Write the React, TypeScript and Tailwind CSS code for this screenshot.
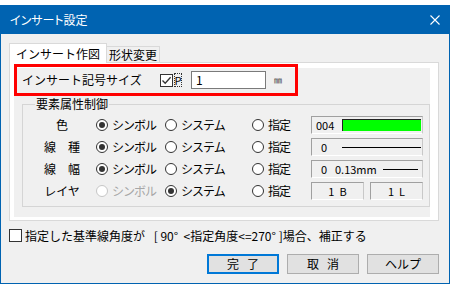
import React from "react";

function Radio({ checked, disabled, label }: { checked?: boolean; disabled?: boolean; label: string }) {
  return (
    <div className="flex items-center">
      <span
        className={`w-[12px] h-[12px] rounded-full border bg-white flex items-center justify-center shrink-0 ${
          disabled ? "border-[#c6c6c6]" : "border-[#333333]"
        }`}
      >
        {checked && <span className="w-[6px] h-[6px] rounded-full bg-[#333333]" />}
      </span>
      <span className={`ml-[4px] tracking-[-1px] whitespace-nowrap ${disabled ? "text-[#a6a6a6]" : "text-black"}`}>
        {label}
      </span>
    </div>
  );
}

function Field({ children, className = "" }: { children?: React.ReactNode; className?: string }) {
  return (
    <div
      className={`h-[18px] border border-t-[#a0a0a0] border-l-[#a0a0a0] border-r-[#c8c8c8] border-b-white flex items-center text-[11px] ${className}`}
    >
      {children}
    </div>
  );
}

function Row({
  label,
  r1,
  r2,
  r1Disabled,
  field,
}: {
  label: string;
  r1?: boolean;
  r2?: boolean;
  r1Disabled?: boolean;
  field: React.ReactNode;
}) {
  return (
    <div className="flex items-center h-[22px]">
      <div className="ml-[19px] w-[40px] text-center whitespace-pre">{label}</div>
      <div className="ml-[14px] w-[69px]">
        <Radio checked={r1} disabled={r1Disabled} label="シンボル" />
      </div>
      <div className="w-[87px]">
        <Radio checked={r2} label="システム" />
      </div>
      <div className="w-[59px]">
        <Radio label="指定" />
      </div>
      {field}
    </div>
  );
}

function Btn({ a, b, primary }: { a: string; b?: string; primary?: boolean }) {
  return (
    <button
      className={`h-[20px] bg-[#e1e1e1] flex items-center justify-center gap-[8px] ${
        primary ? "w-[72px] border-2 border-[#0078d7]" : "w-[72px] border border-[#adadad]"
      }`}
    >
      <span>{a}</span>
      {b && <span>{b}</span>}
    </button>
  );
}

export default function App() {
  return (
    <div className="w-[450px] h-[289px] bg-white pt-[5px] [font-family:'Noto_Sans_CJK_JP',sans-serif] text-[12px] leading-[16px] text-black">
      <div className="w-[450px] h-[279px] border border-[#0063b1] bg-[#f0f0f0] flex flex-col">
        {/* title bar */}
        <div className="h-[28px] bg-[#0063b1] flex items-center justify-between pl-[9px] pr-[9px]">
          <span className="text-white text-[12px] [font-feature-settings:'palt']">インサート設定</span>
          <svg width="10" height="10" viewBox="0 0 10 10">
            <path d="M0.5 0.5 L9.5 9.5 M9.5 0.5 L0.5 9.5" stroke="white" strokeWidth="1.1" fill="none" />
          </svg>
        </div>

        {/* body */}
        <div className="flex flex-col pl-[8px] pr-[10px] pt-[9px]">
          {/* tabs */}
          <div className="flex items-end h-[20px] -mb-[1px]">
            <div className="relative z-10 w-[98px] h-[20px] bg-white border border-b-0 border-[#d9d9d9] flex items-center justify-center">
              インサート作図
            </div>
            <div className="w-[53px] h-[17px] bg-[#f0f0f0] border border-l-0 border-[#d9d9d9] flex items-start justify-center leading-[15px]">
              形状変更
            </div>
          </div>

          {/* panel */}
          <div className="relative w-[430px] h-[159px] border border-[#d9d9d9] bg-white pl-[4px] pt-[5px]">
            <div className="w-[416px] h-[149px] bg-[#f0f0f0] flex flex-col">
              {/* size row */}
              <div className="flex items-center h-[18px] mt-[3px] pl-[8px]">
                <div className="w-[138px] whitespace-nowrap">インサート記号サイズ</div>
                <div className="w-[13px] h-[13px] border border-[#333333] bg-white flex items-center justify-center">
                  <svg width="11" height="11" viewBox="0 0 11 11">
                    <path d="M1.5 5.5 L4.2 8.3 L9.6 2.2" stroke="#333333" strokeWidth="1.3" fill="none" />
                  </svg>
                </div>
                <div className="ml-[1px] w-[8px] h-[14px] border border-dotted border-[#333333] flex items-center justify-center text-[11px] leading-[12px]">
                  P
                </div>
                <div className="ml-[9px] w-[75px] h-[18px] bg-white border border-[#7a7a7a] flex items-center pl-[4px] text-[12px]">
                  1
                </div>
                <div className="ml-[8px] text-[8px] text-[#333333]">㎜</div>
              </div>

              {/* group */}
              <fieldset className="mt-[7px] ml-[8px] w-[408px] border border-[#d5d5d5] pb-[4px]">
                <legend className="ml-[12px] px-[1px] leading-[16px]">要素属性制御</legend>
                <div className="pt-[2px] flex flex-col">
                  <Row
                    label="色"
                    r1
                    field={
                      <Field className="w-[112px] pl-[4px]">
                        <span className="w-[26px]">004</span>
                        <span className="flex-1 h-[12px] mr-[1px] bg-[#00ff00] border-l border-t border-[#222222]" />
                      </Field>
                    }
                  />
                  <Row
                    label="線　種"
                    r1
                    field={
                      <Field className="w-[112px] pl-[9px]">
                        <span className="w-[21px]">0</span>
                        <span className="w-[79px] h-[1px] bg-black" />
                      </Field>
                    }
                  />
                  <Row
                    label="線　幅"
                    r1
                    field={
                      <Field className="w-[112px] pl-[9px]">
                        <span className="w-[14px]">0</span>
                        <span className="w-[48px]">0.13mm</span>
                        <span className="w-[35px] h-[1px] bg-black" />
                      </Field>
                    }
                  />
                  <Row
                    label="レイヤ"
                    r1Disabled
                    r2
                    field={
                      <div className="flex gap-[6px]">
                        <Field className="w-[53px] justify-center whitespace-pre">1  B</Field>
                        <Field className="w-[53px] justify-center whitespace-pre">1  L</Field>
                      </div>
                    }
                  />
                </div>
              </fieldset>
            </div>

            {/* red annotation */}
            <div className="absolute left-[4px] top-[1px] w-[284px] h-[32px] border-[3px] border-[#ff0000] pointer-events-none" />
          </div>

          {/* correction checkbox */}
          <div className="flex items-center mt-[8px] h-[13px]">
            <div className="w-[13px] h-[13px] border border-[#333333] bg-white" />
            <span className="ml-[3px] whitespace-pre">
              {"指定した基準線角度が\u2002 [ 90°  <指定角度<=270° ]場合、補正する"}
            </span>
          </div>

          {/* buttons */}
          <div className="flex justify-end gap-[8px] mt-[12px]">
            <Btn a="完" b="了" primary />
            <Btn a="取" b="消" />
            <Btn a="ヘルプ" />
          </div>
        </div>
      </div>
    </div>
  );
}
